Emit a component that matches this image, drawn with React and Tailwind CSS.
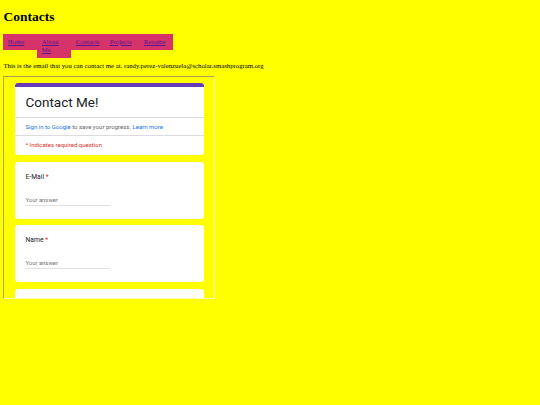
import React from "react";

const navItems = ["Home", "About Me", "Contacts", "Projects", "Resume"];

function Question({ label }) {
  return (
    <div className="h-[57px] shrink-0 rounded-[3.4px] bg-white px-[10.5px] pt-[12px]">
      <p className="text-[6.75px] leading-[7px] text-[#202124]">
        {label} <span className="text-[#d93025]">*</span>
      </p>
      <div className="mt-[16px] w-[85px] border-b-[0.6px] border-[#e0e0e0] pb-[2px] text-[5.9px] leading-[6px] text-[#70757a]">
        Your answer
      </div>
    </div>
  );
}

export default function App() {
  return (
    <div className="min-h-screen bg-[#ffff00] px-[3.4px] pt-[9px] font-['Liberation_Serif',serif] text-black">
      <h1 className="text-[13.5px] font-bold leading-[15.5px]">Contacts</h1>

      <ul className="mt-[9px] flex h-[16.4px] w-[170px] items-start bg-[#d7336b]">
        {navItems.map((item) => (
          <li
            key={item}
            className="w-[34px] shrink-0 bg-[#d7336b] px-[4.4px] py-[4.3px] text-[6.75px] leading-[7.75px]"
          >
            <a href="#" className="text-[#551a8b] underline">
              {item}
            </a>
          </li>
        ))}
      </ul>

      <p className="mt-[12px] text-[6.75px] leading-[7.75px]">
        This is the email that you can contact me at. randy.perez-valenzuela@scholar.smashprogram.org
      </p>

      <div className="mt-[6.75px] h-[222.5px] w-[212px] overflow-hidden border border-t-[#a8a850] border-l-[#a8a850] border-r-[#ffffb0] border-b-[#ffffb0] bg-[#ffff00] font-['Roboto',sans-serif]">
        <div className="flex flex-col gap-[6.7px] px-[10.6px] pt-[5.8px]">
          <div className="shrink-0 overflow-hidden rounded-[3.4px] bg-white">
            <div className="h-[4.2px] bg-[#673ab7]" />
            <div className="px-[10.5px] pb-[6.7px] pt-[6.7px] text-[13.5px] leading-[16px] text-[#202124]">
              Contact Me!
            </div>
            <div className="flex h-[18.8px] items-center border-y-[0.6px] border-[#dadce0] px-[10.5px] text-[6px] text-[#5f6368]">
              <span className="text-[#1a73e8]">Sign in to Google</span>
              <span className="ml-[1.5px]">to save your progress.</span>
              <span className="ml-[1.5px] text-[#1a73e8]">Learn more</span>
            </div>
            <div className="flex h-[19.5px] items-center px-[10.5px] pb-[2px] text-[6px] text-[#d93025]">
              * Indicates required question
            </div>
          </div>

          <Question label="E-Mail" />
          <Question label="Name" />
          <div className="h-[57px] shrink-0 rounded-[3.4px] bg-white" />
        </div>
      </div>
    </div>
  );
}
